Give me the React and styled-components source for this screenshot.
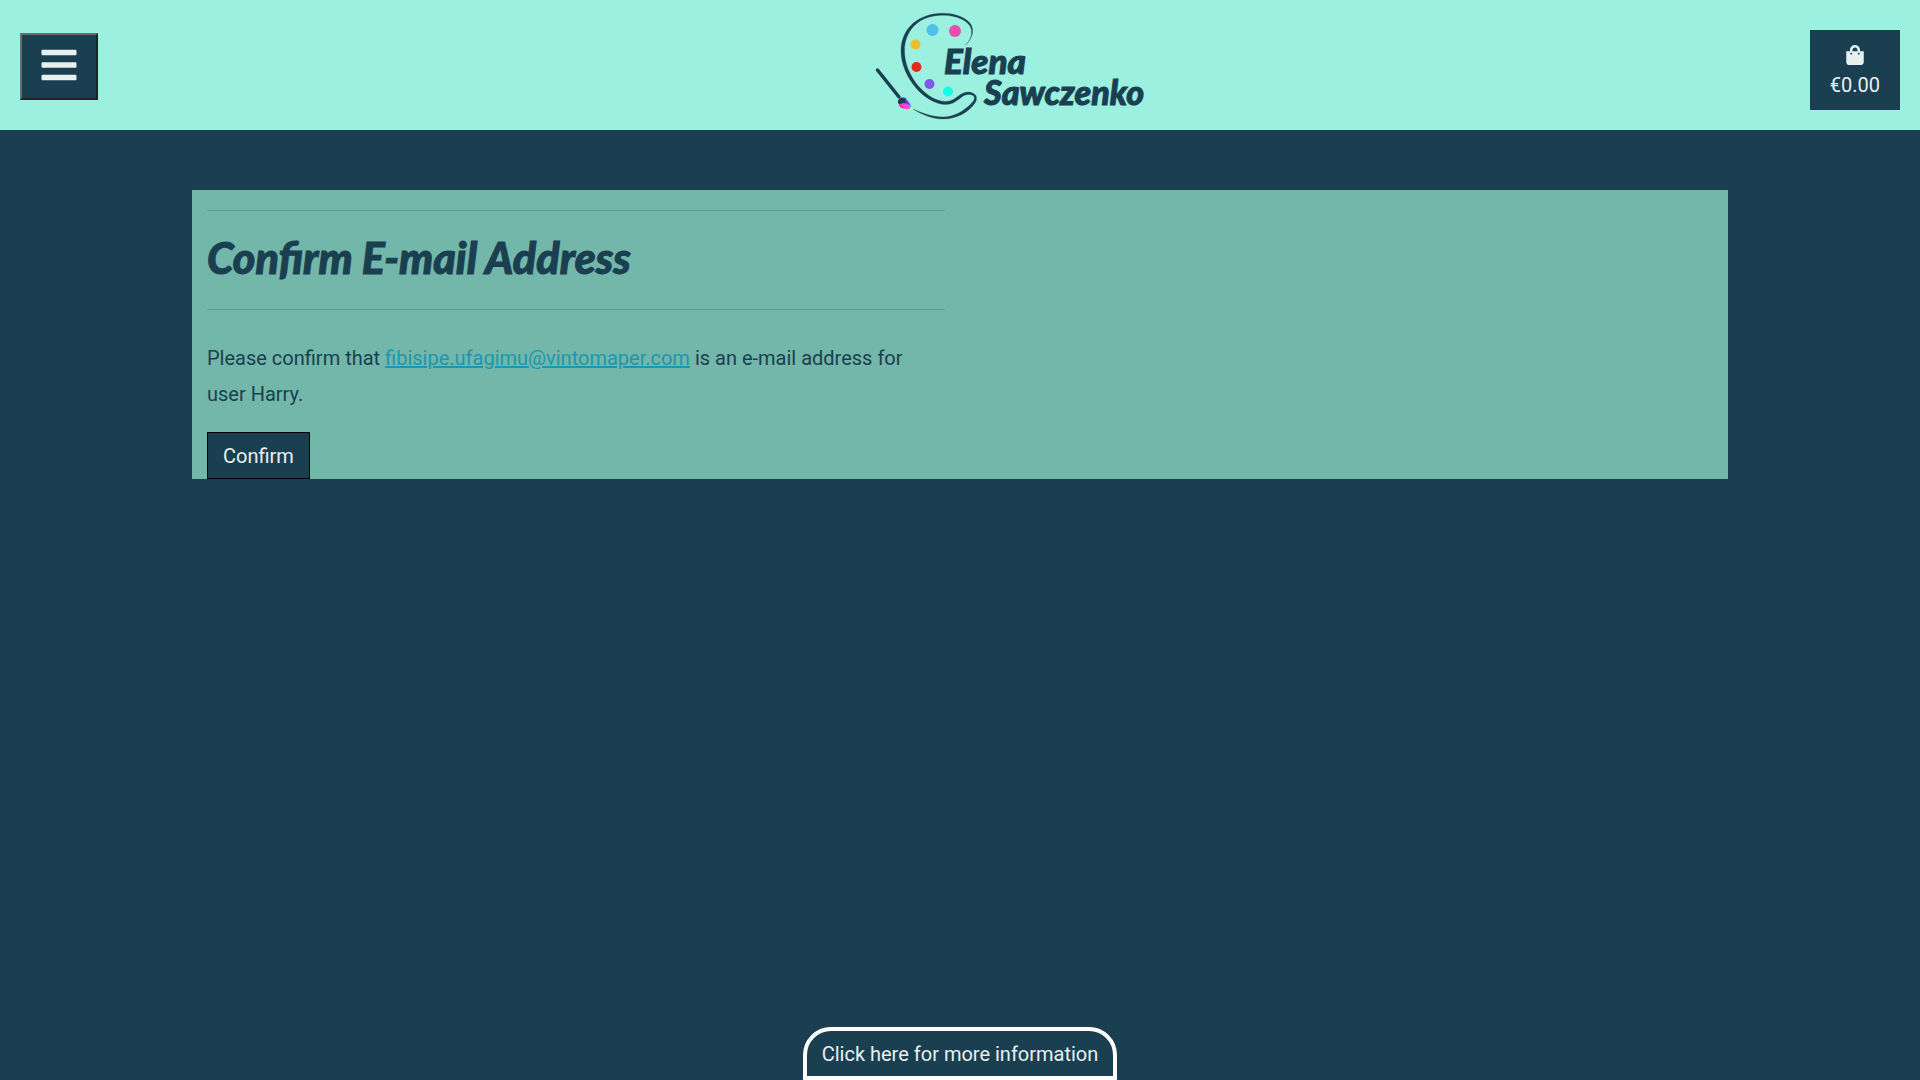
import React from "react";
import styled, { createGlobalStyle } from "styled-components";
import { FaBars, FaShoppingBag } from "react-icons/fa";

const navy = "#1a3f50";
const mint = "#9cf0e0";
const sage = "#73b6aa";
const pale = "#e8f0ef";

const GlobalStyle = createGlobalStyle`
  *, *::before, *::after { box-sizing: border-box; }
  body {
    margin: 0;
    background: ${navy};
    color: ${navy};
    font: 20px/36px Roboto, "Liberation Sans", sans-serif;
  }
`;

const Header = styled.header`
  display: grid;
  grid-template-columns: 1fr auto 1fr;
  align-items: center;
  padding: 0 20px;
  background: ${mint};
`;

const MenuButton = styled.button`
  display: flex;
  justify-self: start;
  align-items: center;
  margin-top: 3px;
  padding: 10px 17px 13px;
  background: ${navy};
  border: 2px solid;
  border-color: #6c6c6c #212121 #212121 #6c6c6c;
  color: ${pale};
  font-size: 40px;
  cursor: pointer;
`;

const LogoLink = styled.a`
  display: block;
  svg { display: block; }
`;

const LogoText = styled.text`
  font: italic 900 ${(p) => p.$size}px Lato, sans-serif;
  fill: ${navy};
  stroke: ${navy};
  stroke-width: 1px;
`;

const Cart = styled.a`
  display: flex;
  flex-direction: column;
  align-items: center;
  justify-self: end;
  margin-top: 10px;
  padding: 10px 20px;
  background: ${navy};
  color: ${pale};
  line-height: 30px;
  text-decoration: none;
`;

const CartIcon = styled.span`
  display: flex;
  align-items: center;
  height: 30px;
`;

const Panel = styled.main`
  width: 80%;
  margin: 60px auto 0;
  background: ${sage};
`;

const Column = styled.section`
  width: 50%;
  padding: 20px 15px 0;
`;

const Title = styled.h1`
  margin: 0;
  padding: 18px 0 22px;
  border: solid #5a9c95;
  border-width: 1px 0;
  font: italic 900 43px/58px Lato, sans-serif;
  -webkit-text-stroke: 1px ${navy};
`;

const Message = styled.p`
  margin: 30px 0 20px;
`;

const MailLink = styled.a`
  color: #1b98b1;
`;

const ConfirmButton = styled.button`
  display: block;
  padding: 10px 15px 8px;
  background: ${navy};
  border: 1px solid #000;
  color: ${pale};
  font: 20px/27px Roboto, sans-serif;
  cursor: pointer;
`;

const InfoBar = styled.div`
  position: fixed;
  inset: auto 0 0;
  display: flex;
  justify-content: center;
`;

const InfoButton = styled.button`
  padding: 9px 15px 7px;
  background: ${navy};
  border: 4px solid #fff;
  border-radius: 28px 28px 0 0;
  color: ${pale};
  font: 20px/29px Roboto, sans-serif;
  cursor: pointer;
`;

const paints = [
  [932.5, 30, 6, "#50c0e8"],
  [955, 31, 6, "#eb4cae"],
  [915.5, 44.5, 5, "#e8bf2c"],
  [916.5, 67, 5, "#df2c1c"],
  [929.5, 84, 5, "#7e58ea"],
  [948, 91.5, 5, "#14ffe4"],
];

function Logo() {
  return (
    <svg width="400" height="130" viewBox="760 0 400 130" role="img" aria-label="Elena Sawczenko">
      <path
        fill={navy}
        stroke={navy}
        strokeWidth="0.3"
        d="M965.5 45 C973 38 975 29 969.5 22.5 C962 15 950 12.5 938 13.5 C915 15.5 901 31 901 51 C901 77 925 104.5 946 104.5 C957 104.5 961 94.5 968 94.5 C974 94.5 976 97 973 101.5 C964 112 953 117 943 117 C932 117 922 113 913 109 C922 114.5 932 119 943 119 C957 119 969 112 975 103 C979 97 975 92 968 92 C959 92 956 101.5 946 101.5 C927 101.5 904.5 76 904.5 51 C904.5 32 917 17 938 15.5 C950 14.5 961 17 968 23.5 C973.5 29 973 38 965.5 45Z"
      />
      <path d="M877.5 70 L899 97" stroke={navy} strokeWidth="3.5" strokeLinecap="round" />
      <path d="M898 103 C897 98 903 96 906 98.5 L909 105 L901 106Z" fill={navy} />
      <path d="M905 98.5 C908 100 910 104 911.5 107 L906 104Z" fill="#6a3cff" />
      <path d="M899 105 C902 102.5 906 103 909 105 L910 108.5 C906 110 901 108.5 899 105Z" fill="#ff45d8" />
      <path d="M899 104 L904 108.5 C901 108 899 106.5 899 104Z" fill="#e82058" />
      <path d="M909 104 L911.5 107 L910 109Z" fill="#38bdf8" />
      <path d="M911 106.5 L914 108.5 L910 109.5Z" fill="#f6ed30" />
      {paints.map(([x, y, r, colour]) => (
        <circle key={colour} cx={x} cy={y} r={r} fill={colour} />
      ))}
      <LogoText $size={35} x="944" y="74">Elena</LogoText>
      <LogoText $size={34} x="984" y="105">Sawczenko</LogoText>
    </svg>
  );
}

export default function App() {
  return (
    <>
      <GlobalStyle />
      <Header>
        <MenuButton type="button" aria-label="Menu"><FaBars /></MenuButton>
        <LogoLink href="#"><Logo /></LogoLink>
        <Cart href="#">
          <CartIcon><FaShoppingBag /></CartIcon>
          <span>€0.00</span>
        </Cart>
      </Header>
      <Panel>
        <Column>
          <Title>Confirm E-mail Address</Title>
          <Message>
            Please confirm that{" "}
            <MailLink href="mailto:fibisipe.ufagimu@vintomaper.com">fibisipe.ufagimu@vintomaper.com</MailLink>{" "}
            is an e-mail address for user Harry.
          </Message>
          <ConfirmButton type="submit">Confirm</ConfirmButton>
        </Column>
      </Panel>
      <InfoBar>
        <InfoButton type="button">Click here for more information</InfoButton>
      </InfoBar>
    </>
  );
}
